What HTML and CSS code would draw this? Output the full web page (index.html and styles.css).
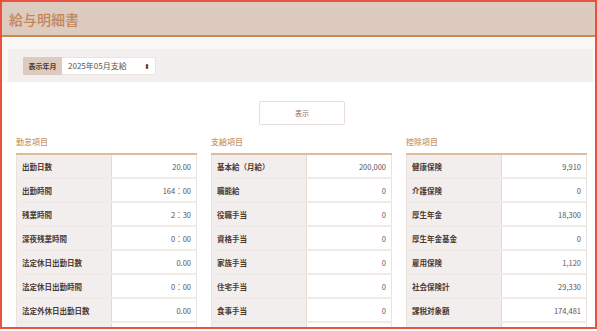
FILE: index.html
```html
<!DOCTYPE html>
<html lang="ja">
<head>
  <meta charset="UTF-8" />
  <title>給与明細書</title>
  <link rel="stylesheet" href="styles.css">
</head>
<body>
  <div class="frame">
    <header class="page-head">
      <h1>給与明細書</h1>
    </header>

    <div class="filter-wrap">
      <div class="filter-bar">
        <label class="filter-label">表示年月</label>
        <div class="filter-select">
          <span>2025年05月支給</span>
          <span class="arrows">⬍</span>
        </div>
      </div>
    </div>

    <div class="actions">
      <button class="show-btn">表示</button>
    </div>

    <div class="columns">
      <section class="col">
        <h2>勤怠項目</h2>
        <table class="slip">
          <tr><th>出勤日数</th><td>20.00</td></tr>
          <tr><th>出勤時間</th><td>164：00</td></tr>
          <tr><th>残業時間</th><td>2：30</td></tr>
          <tr><th>深夜残業時間</th><td>0：00</td></tr>
          <tr><th>法定休日出勤日数</th><td>0.00</td></tr>
          <tr><th>法定休日出勤時間</th><td>0：00</td></tr>
          <tr><th>法定外休日出勤日数</th><td>0.00</td></tr>
          <tr><th>法定外休日出勤時間</th><td>0：00</td></tr>
        </table>
      </section>

      <section class="col">
        <h2>支給項目</h2>
        <table class="slip">
          <tr><th>基本給（月給）</th><td>200,000</td></tr>
          <tr><th>職能給</th><td>0</td></tr>
          <tr><th>役職手当</th><td>0</td></tr>
          <tr><th>資格手当</th><td>0</td></tr>
          <tr><th>家族手当</th><td>0</td></tr>
          <tr><th>住宅手当</th><td>0</td></tr>
          <tr><th>食事手当</th><td>0</td></tr>
          <tr><th>通勤手当（月額）</th><td>1,111</td></tr>
        </table>
      </section>

      <section class="col">
        <h2>控除項目</h2>
        <table class="slip">
          <tr><th>健康保険</th><td>9,910</td></tr>
          <tr><th>介護保険</th><td>0</td></tr>
          <tr><th>厚生年金</th><td>18,300</td></tr>
          <tr><th>厚生年金基金</th><td>0</td></tr>
          <tr><th>雇用保険</th><td>1,120</td></tr>
          <tr><th>社会保険計</th><td>29,330</td></tr>
          <tr><th>課税対象額</th><td>174,481</td></tr>
          <tr><th>所得税</th><td>3,111</td></tr>
        </table>
      </section>
    </div>
  </div>
</body>
</html>
```

FILE: styles.css
```css
/* Page reset */
body {
  margin: 0;
  background: #fff;
  font-family: "Noto Sans CJK JP", "Noto Sans", sans-serif;
  color: #4a3a31;
}

/* Outer window frame */
.frame {
  box-sizing: border-box;
  width: 597px;
  height: 329px;
  border: 2px solid #e8523e;
  overflow: hidden;
  background: #fff;
}

/* Title bar */
.page-head {
  height: 33px;
  background: #decbbf;
  border-bottom: 2px solid #c98a4f;
  display: flex;
  align-items: center;
  padding-left: 7px;
}

.page-head h1 {
  margin: 0;
  font-size: 14px;
  font-weight: 500;
  color: #c28656;
}

/* Month filter */
.filter-wrap {
  background: #faf7f7;
  padding: 12px 2px 0 6px;
}

.filter-bar {
  height: 33px;
  background: #f3efef;
  display: flex;
  align-items: center;
  padding-left: 15px;
}

.filter-label {
  height: 18px;
  width: 39px;
  background: #decbbf;
  font-size: 7px;
  font-weight: bold;
  color: #4a3a31;
  display: flex;
  align-items: center;
  justify-content: center;
}

.filter-select {
  box-sizing: border-box;
  height: 18px;
  width: 94px;
  background: #fff;
  border: 1px solid #ece4df;
  border-left: none;
  display: flex;
  align-items: center;
  justify-content: space-between;
  padding: 0 5px 0 6px;
  font-size: 8px;
  color: #555;
}

.filter-select .arrows {
  font-size: 7px;
  color: #333;
}

/* Show button */
.actions {
  display: flex;
  justify-content: center;
  padding: 19px 0 0 7px;
}

.show-btn {
  width: 86px;
  height: 24px;
  background: #fff;
  border: 1px solid #e6ddd8;
  border-radius: 2px;
  font-family: inherit;
  font-size: 7px;
  color: #8a6b5a;
}

/* Three slip columns */
.columns {
  display: grid;
  grid-template-columns: repeat(3, 181px);
  column-gap: 14px;
  padding: 10px 0 0 14px;
}

.col h2 {
  margin: 0 0 4px;
  font-size: 8px;
  font-weight: 500;
  color: #c9976b;
  line-height: 14px;
}

.slip {
  width: 100%;
  border-collapse: collapse;
  border-top: 2px solid #dcbb9e;
  font-size: 7.5px;
}

.slip th,
.slip td {
  height: 22px;
  border-bottom: 2px solid #f1ebe8;
  padding: 0 5px;
}

.slip th {
  width: 84px;
  background: #f3eeee;
  text-align: left;
  font-weight: bold;
  color: #4a3a31;
  border-left: 1px solid #ebe2dd;
  border-right: 1px solid #e4dad4;
}

.slip td {
  text-align: right;
  color: #5c5452;
  border-right: 1px solid #ebe2dd;
}
```
